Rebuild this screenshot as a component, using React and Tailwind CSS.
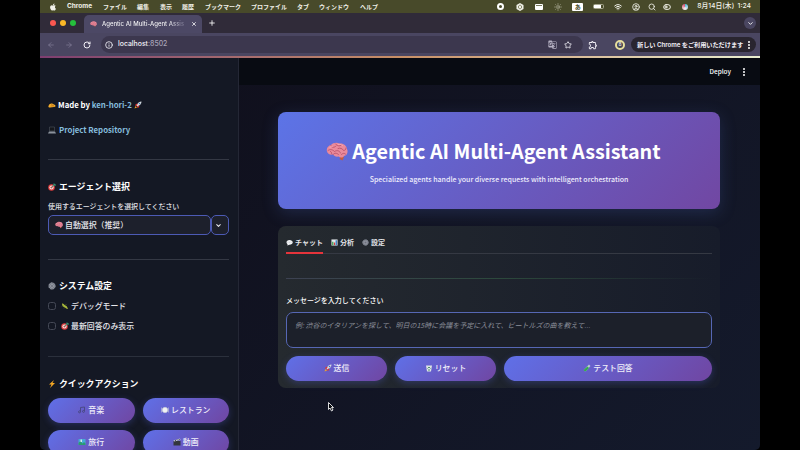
import React from "react";
import { ArrowLeft, ArrowRight, RotateCw, Info, Star, X, Plus, ChevronDown, Wifi, Search, CircleUser, Sun, ToggleLeft } from "lucide-react";
import { FaApple } from "react-icons/fa";
import { MdGTranslate, MdOutlineExtension } from "react-icons/md";

const uiFont = "font-['Inter','Noto_Sans_CJK_JP',sans-serif]";
const pageFont = "font-['Noto_Sans_CJK_JP',sans-serif]";

function Brain({ className }) {
  return (
    <svg viewBox="0 0 44 38" className={className}>
      <path d="M30 27 L36 30 L33 37 L27 34 Z" fill="#c65a3e" />
      <path d="M2 19 C0 12 5 7 10 6 C14 1 22 0 27 3 C35 2 41 7 42 14 C45 20 42 27 36 28 C34 32 28 32 25 29 C20 30 16 28 14 25 C8 26 3 24 2 19 Z" fill="#ea8a9b" />
      <g fill="none" stroke="#b84f68" strokeWidth="1.7" strokeLinecap="round">
        <path d="M10 7 C11 11 15 12 19 9 M19 4 C22 8 27 9 31 6 M4 17 C9 13 14 16 17 19 C22 16 27 17 29 22" />
        <path d="M14 25 C17 21 22 22 25 25 M24 13 C28 11 33 13 35 17 C38 17 40 15 40 12 M31 25 C33 22 37 22 39 24 M9 19 C11 20 12 22 11 24" />
      </g>
      <path d="M8 11 C10 8 12 8 13 9 M25 5 C28 4 32 5 33 7" stroke="#f9b5bd" strokeWidth="1.6" fill="none" strokeLinecap="round" />
    </svg>
  );
}

const emojis = {
  hand: (
    <>
      <path d="M1 10 C3 5 7 4 10 6 L14 8 C16 10 15 12 12 12 L4 13 C2 13 0 12 1 10Z" fill="#f6ad2b" />
      <path d="M5 10 L12 10 M6 7 L11 9" stroke="#9a5b12" strokeWidth="1" />
    </>
  ),
  rocket: (
    <>
      <path d="M3 8 L7 6 L10 9 L8 13 L6 10Z" fill="#d93832" />
      <path d="M5 9 C7 4 11 1 15 1 C15 5 12 9 7 11Z" fill="#d5d9df" />
      <path d="M2 8 L6 5 L7 7 L4 10Z M8 14 L11 10 L9 9 L6 12Z" fill="#d93832" />
      <circle cx="11" cy="5" r="1.5" fill="#3979b8" />
      <path d="M1 15 L3 10 L6 13Z" fill="#f5a623" />
    </>
  ),
  laptop: (
    <>
      <path d="M3 2 H13 V10 H3Z" fill="#15171c" stroke="#565c66" strokeWidth="1" />
      <path d="M2 11 H14 L16 15 H0Z" fill="#8b929c" />
    </>
  ),
  target: (
    <>
      <circle cx="7" cy="9" r="6.5" fill="#df3d3d" />
      <circle cx="7" cy="9" r="4.2" fill="#f3eeee" />
      <circle cx="7" cy="9" r="2.2" fill="#df3d3d" />
      <path d="M7 9 L13 3 M12 1 V4 H16" stroke="#38a07f" strokeWidth="2" fill="none" />
    </>
  ),
  gear: (
    <>
      <circle cx="8" cy="8" r="6.3" fill="#777b86" stroke="#a1a6b1" strokeWidth="2" strokeDasharray="2 1" />
      <circle cx="8" cy="8" r="3" fill="#6b6f7b" stroke="#b7bbc5" strokeWidth="1" />
    </>
  ),
  bug: (
    <>
      <path d="M2 3 C5 2 6 6 9 7 C12 8 13 11 14 14 C10 14 9 11 6 10 C3 9 2 6 2 3Z" fill="#a8b83b" />
      <path d="M4 7 L2 9 M7 10 L6 13 M9 6 L11 4" stroke="#738328" strokeWidth="1" />
    </>
  ),
  bolt: <path d="M12 0 L2 9 H7 L4 16 L14 6 H9Z" fill="#f7a823" />,
  note: <path d="M5 12 V3 L13 2 V11 M5 12 A2 2 0 1 1 4 10 M13 11 A2 2 0 1 1 12 9" stroke="#4a4a86" strokeWidth="2" fill="none" />,
  plate: (
    <>
      <circle cx="8" cy="8" r="5.5" fill="#f1f2f4" stroke="#c5cad2" strokeWidth="1" />
      <path d="M1 3 V13 M15 3 V13" stroke="#c5cad2" strokeWidth="1.2" />
    </>
  ),
  travel: (
    <>
      <path d="M1 2 H15 V14 H1Z" fill="#47a8d8" />
      <path d="M1 10 L5 6 L9 11 L12 8 L15 11 V14 H1Z" fill="#2c9b71" />
      <path d="M5 3 H8 V8 H5Z" fill="#d7e6ec" />
    </>
  ),
  film: (
    <>
      <path d="M1 6 H15 V15 H1Z" fill="#33363d" />
      <path d="M1 5 L14 1 L15 4 L2 7Z" fill="#c7ccd2" />
      <path d="M4 4 L6 6 M8 3 L10 5 M12 2 L13 4" stroke="#24262b" strokeWidth="1.5" />
    </>
  ),
  chat: (
    <>
      <path d="M8 2 C12 2 15.500 4 15.500 7.500 C15.500 11 12 13 8 13 L3 15 L3.500 12 C-1 8 1 2 8 2Z" fill="#f2f3f5" />
      <path d="M4 7.500 H5 M7.500 7.500 H8.500 M11 7.500 H12" stroke="#777d88" strokeWidth="1.5" />
    </>
  ),
  chart: (
    <>
      <path d="M1 1 H15 V15 H1Z" fill="#e5e9ed" />
      <path d="M4 14 V6" stroke="#39a853" strokeWidth="3" />
      <path d="M8 14 V8" stroke="#d94343" strokeWidth="3" />
      <path d="M12 14 V3" stroke="#347cc4" strokeWidth="3" />
    </>
  ),
  trash: (
    <>
      <path d="M2 3 H14 L12 15 H4Z" fill="#dce3e5" />
      <path d="M5 9 L8 6 L11 9 M6 12 H10" stroke="#36825c" strokeWidth="1.7" fill="none" />
    </>
  ),
  tube: (
    <>
      <path d="M12 1 L15 4 L6 14 C3 16 0 13 3 10Z" fill="#b6cfcc" />
      <path d="M9 5 L12 8 L6 14 C3 16 0 13 3 10Z" fill="#36a852" />
    </>
  ),
};

function Emoji({ name, className = "size-2" }) {
  if (name === "brain") return <Brain className={"shrink-0 " + className} />;
  return <svg viewBox="0 0 16 16" className={"shrink-0 " + className}>{emojis[name]}</svg>;
}

function Heading({ icon, children, className }) {
  return (
    <h2 className={"flex h-[18px] items-center gap-[3px] text-[8.9px] font-bold text-white " + className}>
      <Emoji name={icon} />
      <span>{children}</span>
    </h2>
  );
}

function Check({ icon, children, className }) {
  return (
    <div className={"flex h-3 items-center text-[7.9px] font-medium text-[#e6e7ec] " + className}>
      <span className="mr-[5px] size-2 rounded-[2.5px] border border-[#454956]" />
      <Emoji name={icon} />
      <span className="ml-[2px]">{children}</span>
    </div>
  );
}

function Pill({ icon, children, className = "" }) {
  return (
    <button className={"flex h-[25px] items-center justify-center gap-[2px] rounded-full bg-linear-[135deg,#5f70e8,#7046a2] pb-px text-[7.9px] font-medium text-[#f0effa] shadow-[0_2px_7px_rgba(85,95,210,0.32)] " + className}>
      <Emoji name={icon} />
      <span>{children}</span>
    </button>
  );
}

function Dots({ className = "" }) {
  return (
    <span className={"flex flex-col gap-px " + className}>
      <i className="size-[2px] rounded-full bg-white" />
      <i className="size-[2px] rounded-full bg-white" />
      <i className="size-[2px] rounded-full bg-white" />
    </span>
  );
}

function MenuBar() {
  const items = [
    ["ファイル", "w-[34px]"], ["編集", "w-[23px]"], ["表示", "w-[22px]"], ["履歴", "w-[23px]"], ["ブックマーク", "w-[46px]"],
    ["プロファイル", "w-[46px]"], ["タブ", "w-[22px]"], ["ウィンドウ", "w-[41px]"], ["ヘルプ", "w-[30px]"],
  ];
  return (
    <div className={"flex h-[13px] items-center whitespace-nowrap bg-[#484a2a] text-[6px] font-semibold text-[#f0f0e8] " + uiFont}>
      <FaApple className="ml-[9px] size-2" />
      <span className="ml-[10px] w-[36px] text-[6.5px] font-bold">Chrome</span>
      {items.map(([t, w]) => <span key={t} className={"shrink-0 " + w}>{t}</span>)}
      <div className="ml-auto flex items-center">
        <span className="mr-[12px] size-[7px] rounded-full border-2 border-white" />
        <svg viewBox="0 0 16 16" className="mr-[11px] size-2"><path d="M8 0 L15 4 V12 L8 16 L1 12 V4Z" fill="#f0f0e8" /><path d="M5 6 L8 4 L11 6 V10 L8 12 L5 10Z" fill="none" stroke="#72734f" strokeWidth="1.5" /></svg>
        <span className="mr-[11px] flex h-[6px] w-2 items-start rounded-[1px] bg-white p-px"><i className="h-px w-full bg-[#77795e]" /></span>
        <Sun className="mr-[10px] size-2 text-[#b9baa5]" />
        <span className="mr-[10px] flex h-2 w-[11px] items-center justify-center rounded-[1px] bg-white text-[6px] text-[#494b2a]">あ</span>
        <span className="mr-[10px] flex h-[5px] w-[11px] rounded-[1.5px] border border-[#a5a68d]"><i className="w-[7px] bg-white" /></span>
        <Wifi strokeWidth={3} className="mr-[10px] size-2" />
        <CircleUser strokeWidth={2.5} className="mr-2 size-2" />
        <Search strokeWidth={2.5} className="mr-[7px] size-2" />
        <ToggleLeft strokeWidth={3} className="mr-[11px] size-2" />
        <span className="mr-[9px] size-[6px] rounded-full bg-conic from-[#45bbdd] via-[#f4f0f5] to-[#d54773]" />
        <span className="mr-[9px] text-[6.8px] font-medium">8月14日(木)&ensp;1:24</span>
      </div>
    </div>
  );
}

function BrowserChrome() {
  return (
    <div className={uiFont}>
      <div className="flex h-5 items-end bg-[#302b39]">
        <div className="mb-[7px] ml-[10px] flex gap-1">
          <i className="size-[6px] rounded-full bg-[#fb5750]" />
          <i className="size-[6px] rounded-full bg-[#fbb827]" />
          <i className="size-[6px] rounded-full bg-[#25bf3c]" />
        </div>
        <div className="ml-2 flex h-[18px] w-[118px] items-center rounded-t-[5px] bg-[#4c4865] pb-px pl-[6px] text-white">
          <Emoji name="brain" className="h-[6px] w-[7px]" />
          <span className="ml-[5px] w-[83px] whitespace-nowrap bg-linear-to-r from-white from-80% to-[#6a6683] bg-clip-text text-[6px] font-medium text-transparent">Agentic AI Multi-Agent Assis</span>
          <X className="ml-[6px] size-[6px]" strokeWidth={3} />
        </div>
        <Plus className="mb-[6px] ml-[6px] size-2 text-white" strokeWidth={2.5} />
        <span className="mr-[4px] mb-[4px] ml-auto flex size-3 items-center justify-center rounded-full bg-[#4a4661]"><ChevronDown className="size-[7px] text-white" strokeWidth={3} /></span>
      </div>
      <div className="flex h-[23px] items-center bg-[#4a4661] text-[#f1eff6]">
        <ArrowLeft className="ml-[7px] size-2 text-[#85809b]" />
        <ArrowRight className="ml-[10px] size-2 text-[#85809b]" />
        <RotateCw className="ml-[10px] size-2" strokeWidth={3} />
        <div className="ml-[10px] flex h-[17px] w-[482px] items-center rounded-full bg-[#3c374e] pr-[6px] pl-[4px]">
          <Info className="size-2" strokeWidth={2.5} />
          <span className="ml-[5px] text-[6.9px] font-medium">localhost<span className="text-[#a9a4b9]">:8502</span></span>
          <MdGTranslate className="ml-auto size-[9px] text-[#b5b1c3]" />
          <Star className="mr-[5px] ml-[7px] size-2" strokeWidth={2.5} />
        </div>
        <MdOutlineExtension className="ml-[5px] size-[10px]" />
        <span className="ml-[17px] flex size-[10px] items-center justify-center rounded-full border-2 border-[#e7df9d] bg-[#444452] text-[5px]">8</span>
        <div className="ml-[6px] flex h-[15px] w-[125px] shrink-0 items-center rounded-full bg-[#29252f] pl-[6px] text-[6.2px] font-semibold whitespace-nowrap">
          <span className="w-[109px] tracking-[-0.05px]">新しい Chrome をご利用いただけます</span>
          <Dots className="ml-[2px]" />
        </div>
      </div>
    </div>
  );
}

function Sidebar() {
  return (
    <aside className="h-full w-[199px] shrink-0 overflow-hidden border-r border-[#242735] bg-[#141824] pr-[9px] pl-2">
      <p className="mt-[39px] flex h-4 items-center gap-[2px] text-[7.8px] font-bold text-white">
        <Emoji name="hand" /><span>Made by <a className="text-[#86bddd]">ken-hori-2</a></span><Emoji name="rocket" />
      </p>
      <p className="mt-[9px] flex h-4 items-center gap-[3px] text-[7.8px] font-bold text-[#86bddd]">
        <Emoji name="laptop" /><a>Project Repository</a>
      </p>
      <hr className="mt-[21px] border-[#343844]" />
      <Heading icon="target" className="mt-[18px]">エージェント選択</Heading>
      <p className="mt-1 flex h-3 items-center text-[6.95px] font-medium text-[#e2e3e8]">使用するエージェントを選択してください</p>
      <div className="mt-[3px] flex h-5 text-[7.9px] font-medium text-[#e8e8ee]">
        <div className="flex w-[163px] items-center gap-[2px] rounded-[5px] border-[1.5px] border-[#4c5ab5] bg-[#1d202c] pl-[6px]">
          <Emoji name="brain" /><span>自動選択（推奨）</span>
        </div>
        <div className="flex w-[18px] items-center justify-center rounded-[5px] border-[1.5px] border-[#4c5ab5] bg-[#1d202c]">
          <ChevronDown className="mr-1 size-[7px] shrink-0" strokeWidth={3.5} />
        </div>
      </div>
      <hr className="mt-6 border-[#343844]" />
      <Heading icon="gear" className="mt-[17px]">システム設定</Heading>
      <Check icon="bug" className="mt-[5px]">デバッグモード</Check>
      <Check icon="target" className="mt-2">最新回答のみ表示</Check>
      <hr className="mt-6 border-[#2b303c]" />
      <Heading icon="bolt" className="mt-[18px]">クイックアクション</Heading>
      <div className="mt-[5px] grid grid-cols-2 gap-x-2 gap-y-[7px]">
        <Pill icon="note">音楽</Pill>
        <Pill icon="plate">レストラン</Pill>
        <Pill icon="travel">旅行</Pill>
        <Pill icon="film">動画</Pill>
      </div>
    </aside>
  );
}

function Main() {
  return (
    <main className="flex h-full flex-1 flex-col bg-linear-[135deg,#10101d,#141a2c]">
      <header className="flex h-[27px] items-center justify-end bg-[#080b12] pr-[15px] text-[6.4px] font-medium text-white">
        <span className="mr-[12px]">Deploy</span><Dots />
      </header>
      <section className="mt-[27px] ml-[39px] flex h-[97px] w-[442px] flex-col items-center rounded-[8px] bg-linear-[135deg,#5c74e7,#7147a2] shadow-[0_4px_16px_rgba(65,91,160,0.3)]">
        <h1 className="mt-[23px] mr-[11px] flex h-8 items-center gap-[4px] text-[19.8px] font-bold whitespace-nowrap text-white">
          <Brain className="h-[19px] w-[22px]" /><span>Agentic AI Multi-Agent Assistant</span>
        </h1>
        <p className="mt-[6px] h-3 text-[7px] leading-3 font-medium text-[#eeedfc]">Specialized agents handle your diverse requests with intelligent orchestration</p>
      </section>
      <section className="mt-[17px] ml-[39px] h-[162px] w-[442px] rounded-[8px] bg-linear-to-r from-[#252a2f] to-[#171c2a] px-2">
        <nav className="flex h-[28px] gap-2 border-b border-[#353943] text-[7px] font-semibold text-[#e3e4e9]">
          <span className="-mb-px flex w-[37px] items-center gap-[2px] border-b-2 border-[#e5343b] pt-[6px]"><Emoji name="chat" className="size-[7px]" />チャット</span>
          <span className="flex items-center gap-[2px] pt-[5px]"><Emoji name="chart" className="size-[7px]" />分析</span>
          <span className="flex items-center gap-[2px] pt-[5px]"><Emoji name="gear" className="size-[7px]" />設定</span>
        </nav>
        <div className="mt-6 h-px bg-linear-to-r from-[#3d4252] via-[#2c493c] to-transparent" />
        <p className="mt-[15px] flex h-3 items-center text-[7px] font-medium text-white">メッセージを入力してください</p>
        <div className="mt-[6px] h-[36px] w-[426px] rounded-[7px] border-[1.5px] border-[#5667b4] bg-[#1c202a] pt-[6px] pl-2 text-[7px] leading-[13px] text-[#8c909b] italic">例: 渋谷のイタリアンを探して、明日の15時に会議を予定に入れて、ビートルズの曲を教えて...</div>
        <div className="mt-2 flex w-[426px] gap-2">
          <Pill icon="rocket" className="w-[101px]">送信</Pill>
          <Pill icon="trash" className="w-[101px]">リセット</Pill>
          <Pill icon="tube" className="flex-1">テスト回答</Pill>
        </div>
      </section>
      <svg viewBox="0 0 12 18" className="mt-[14px] ml-[89px] h-[9px] w-[6px] overflow-visible"><path d="M1 1 V15 L4 12 L7 18 L10 16 L7 11 H11Z" fill="#080a0e" stroke="#fff" strokeWidth="1.7" /></svg>
    </main>
  );
}

export default function App() {
  return (
    <div className="h-[450px] w-[800px] overflow-hidden bg-black">
      <div className="ml-[40px] flex h-full w-[720px] flex-col overflow-hidden rounded-b-[5px]">
        <MenuBar />
        <BrowserChrome />
        <div className="h-[2px] shrink-0 bg-linear-to-r from-[#7e3e70] via-[#c88f65] to-[#e9efd0]" />
        <div className={"flex min-h-0 flex-1 " + pageFont}>
          <Sidebar />
          <Main />
        </div>
      </div>
    </div>
  );
}
